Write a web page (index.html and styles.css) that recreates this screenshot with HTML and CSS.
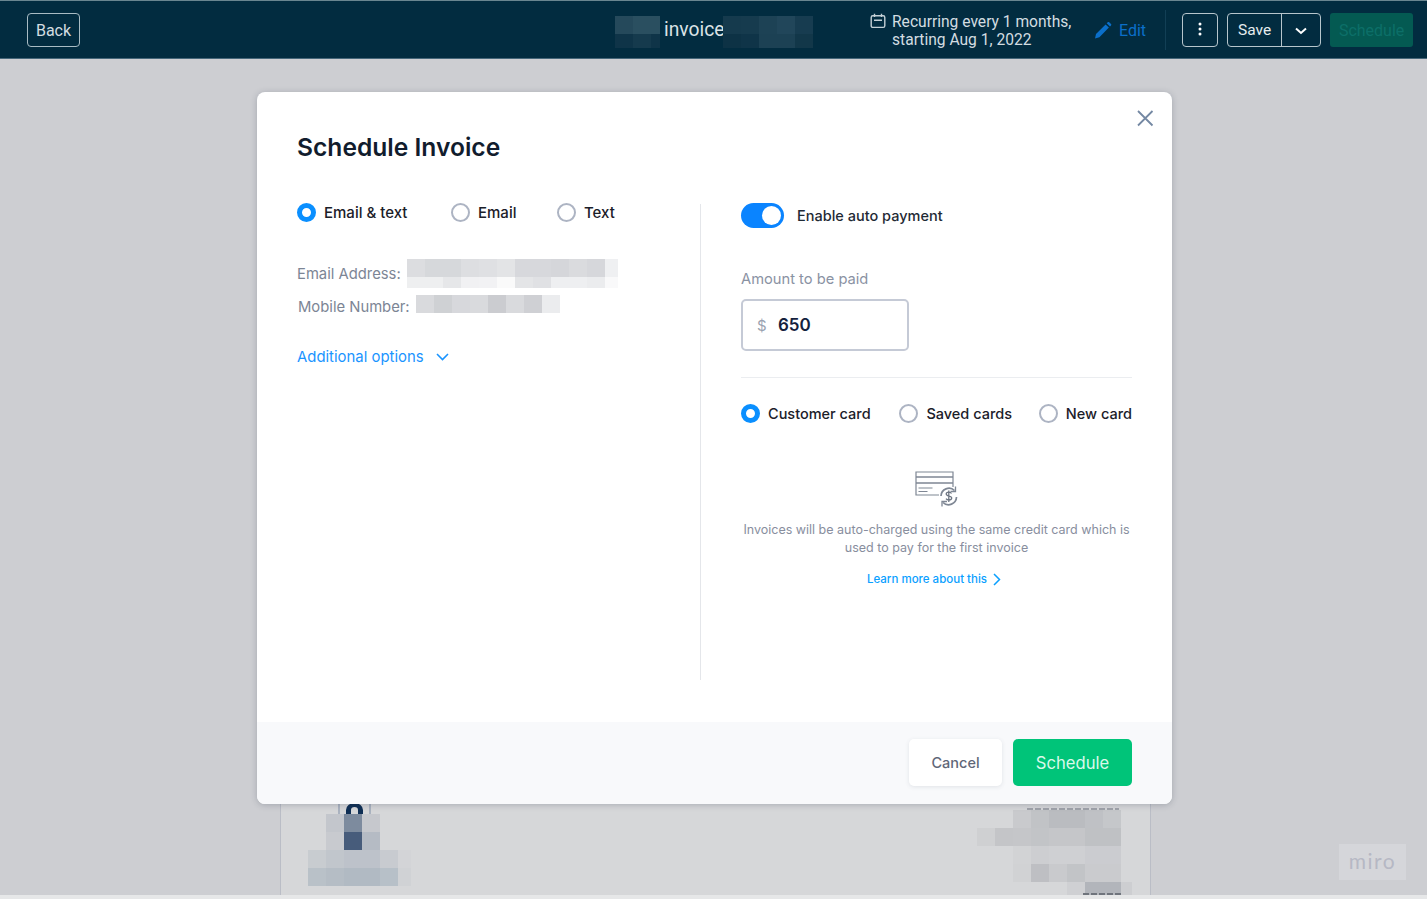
FILE: index.html
```html
<!DOCTYPE html>
<html lang="en">
<head>
    <meta charset="UTF-8">
    <meta name="viewport" content="width=device-width, initial-scale=1.0">
    <title>Schedule Invoice</title>
    <link rel="stylesheet" href="styles.css">
</head>
<body>
    <header class="topbar">
        <button class="btn-outline back-btn">Back</button>

        <div class="doc-title">
            <svg class="mosaic" width="45" height="32" shape-rendering="crispEdges">
                <rect x="0" y="0" width="18" height="18" fill="#25495b"/><rect x="18" y="0" width="27" height="18" fill="#2a4f60"/>
                <rect x="0" y="18" width="18" height="14" fill="#0f3448"/><rect x="18" y="18" width="18" height="14" fill="#153a4d"/><rect x="36" y="18" width="9" height="14" fill="#0f3448"/>
            </svg>
            <span class="doc-title-text">invoice</span>
            <svg class="mosaic" width="90" height="32" shape-rendering="crispEdges">
                <rect x="0" y="0" width="18" height="18" fill="#153a4d"/><rect x="18" y="0" width="18" height="18" fill="#163b4e"/><rect x="36" y="0" width="18" height="18" fill="#1d4255"/><rect x="54" y="0" width="18" height="18" fill="#21465a"/><rect x="72" y="0" width="18" height="18" fill="#173c50"/>
                <rect x="0" y="18" width="18" height="14" fill="#0d3245"/><rect x="18" y="18" width="18" height="14" fill="#0f3448"/><rect x="36" y="18" width="18" height="14" fill="#1c4154"/><rect x="54" y="18" width="18" height="14" fill="#1c4154"/><rect x="72" y="18" width="18" height="14" fill="#123749"/>
            </svg>
        </div>

        <div class="recurring">
            <svg class="cal-icon" width="16" height="16" viewBox="0 0 16 16" fill="none" stroke="#c4d0d6" stroke-width="1.4">
                <rect x="1.2" y="2.8" width="13.6" height="11.6" rx="1.6"/>
                <path d="M4.5 0.8v3.2M11.5 0.8v3.2M4 7.2h8"/>
            </svg>
            <span>Recurring every 1 months,<br>starting Aug 1, 2022</span>
        </div>

        <a class="edit-link" href="#">
            <svg width="18" height="17" viewBox="0 0 18 17" fill="#0b6fc9">
                <path d="M1 16.5l1-4.6L11.6 2.4l3.3 3.2-9.5 9.6zM12.7 1.3l1-1c.5-.4 1-.4 1.500 0l1.800 1.800c.4.4.4 1 0 1.400l-1 1z"/>
            </svg>
            Edit
        </a>

        <span class="bar-divider"></span>

        <button class="btn-outline kebab-btn">
            <svg width="4" height="14" viewBox="0 0 4 14" fill="#fff"><circle cx="2" cy="2" r="1.500"/><circle cx="2" cy="7" r="1.500"/><circle cx="2" cy="12" r="1.500"/></svg>
        </button>

        <div class="save-group">
            <button class="save-btn">Save</button>
            <button class="save-caret">
                <svg width="12" height="8" viewBox="0 0 12 8" fill="none" stroke="#fff" stroke-width="2"><path d="M1 1.500l5 4.500 5-4.500"/></svg>
            </button>
        </div>

        <button class="schedule-dim">Schedule</button>
    </header>

    <main class="page">
        <section class="doc">
            <!-- bits of the blurred invoice that stick out under the modal -->
            <svg class="doc-logo" width="34" height="10">
                <path d="M1 0v10M32 0v10" stroke="#8d9bb0" stroke-width="1.200"/>
                <path d="M8 10V6a8.500 7 0 0 1 17 0v4h-5V6a3.500 3 0 0 0-7 0v4z" fill="#0f2f55"/>
            </svg>
            <svg class="doc-mosaic-left" width="103" height="72" shape-rendering="crispEdges">
                <rect x="18" y="0" width="18" height="18" fill="#c3c6cc"/><rect x="36" y="0" width="18" height="18" fill="#7d8b9e"/><rect x="54" y="0" width="18" height="18" fill="#c6c8cd"/>
                <rect x="18" y="18" width="18" height="18" fill="#c8cacf"/><rect x="36" y="18" width="18" height="18" fill="#475c7b"/><rect x="54" y="18" width="18" height="18" fill="#b5bbc4"/>
                <rect x="0" y="36" width="18" height="18" fill="#c8ccd0"/><rect x="18" y="36" width="18" height="18" fill="#c1c6cc"/><rect x="36" y="36" width="36" height="18" fill="#bdc2ca"/><rect x="72" y="36" width="18" height="18" fill="#c8cbd0"/><rect x="90" y="36" width="13" height="18" fill="#d3d4d7"/>
                <rect x="0" y="54" width="18" height="18" fill="#b9c1c8"/><rect x="18" y="54" width="18" height="18" fill="#b5bdc5"/><rect x="36" y="54" width="36" height="18" fill="#b1bac3"/><rect x="72" y="54" width="18" height="18" fill="#b7c0c8"/><rect x="90" y="54" width="13" height="18" fill="#d0d2d5"/>
            </svg>
            <svg class="doc-mosaic-right" width="155" height="85" shape-rendering="crispEdges">
                <rect x="36" y="0" width="18" height="18" fill="#c9cacd"/><rect x="54" y="0" width="18" height="18" fill="#c1c3c6"/><rect x="72" y="0" width="36" height="18" fill="#babcc0"/><rect x="108" y="0" width="18" height="18" fill="#bfc1c5"/><rect x="126" y="0" width="18" height="18" fill="#c5c7ca"/>
                <rect x="0" y="18" width="18" height="18" fill="#cfd0d2"/><rect x="18" y="18" width="18" height="18" fill="#c4c5c8"/><rect x="36" y="18" width="18" height="18" fill="#c5c6c9"/><rect x="54" y="18" width="18" height="18" fill="#c2c4c7"/><rect x="72" y="18" width="36" height="18" fill="#c5c6c9"/><rect x="108" y="18" width="36" height="18" fill="#bfc1c4"/>
                <rect x="36" y="36" width="18" height="18" fill="#d2d3d5"/><rect x="54" y="36" width="18" height="18" fill="#cdced1"/><rect x="72" y="36" width="36" height="18" fill="#cfd0d3"/><rect x="108" y="36" width="36" height="18" fill="#cbccd0"/>
                <rect x="36" y="54" width="18" height="18" fill="#d1d2d4"/><rect x="54" y="54" width="18" height="18" fill="#bebfc3"/><rect x="72" y="54" width="18" height="18" fill="#c9cacd"/><rect x="90" y="54" width="18" height="18" fill="#c2c4c7"/><rect x="108" y="54" width="36" height="18" fill="#cacbce"/>
                <rect x="90" y="72" width="18" height="13" fill="#cfd0d3"/><rect x="108" y="72" width="36" height="13" fill="#b2b5bb"/><rect x="144" y="72" width="11" height="13" fill="#cdced1"/>
                <path d="M50 -1h92" stroke="#a0a3aa" stroke-width="2" stroke-dasharray="6 2"/>
                <path d="M106 84h39" stroke="#6f747c" stroke-width="2" stroke-dasharray="6 2"/>
            </svg>
        </section>
        <div class="page-foot"></div>

        <span class="miro-badge">miro</span>

        <div class="overlay">
            <div class="modal">
                <button class="modal-close" aria-label="Close">
                    <svg width="18" height="18" viewBox="0 0 18 18" stroke="#7488a3" stroke-width="1.800" fill="none"><path d="M2 2l14.500 14.500M16.500 2L2 16.500"/></svg>
                </button>

                <div class="modal-body">
                    <h1>Schedule Invoice</h1>

                    <div class="columns">
                        <div class="col-left">
                            <div class="radio-row send-row">
                                <label class="radio on">Email &amp; text</label>
                                <label class="radio">Email</label>
                                <label class="radio">Text</label>
                            </div>

                            <div class="detail-row email-row">
                                <span class="detail-label">Email Address:</span>
                                <svg width="211" height="29" shape-rendering="crispEdges">
                                    <rect x="0" y="0" width="18" height="18" fill="#dcdde0"/><rect x="18" y="0" width="36" height="18" fill="#d6d8db"/><rect x="54" y="0" width="18" height="18" fill="#dddee1"/><rect x="72" y="0" width="18" height="18" fill="#dfe0e3"/><rect x="90" y="0" width="18" height="18" fill="#e3e4e6"/><rect x="108" y="0" width="36" height="18" fill="#d7d8dc"/><rect x="144" y="0" width="18" height="18" fill="#d5d6da"/><rect x="162" y="0" width="18" height="18" fill="#dadbde"/><rect x="180" y="0" width="18" height="18" fill="#d6d7db"/><rect x="198" y="0" width="13" height="18" fill="#eff0f2"/>
                                    <rect x="0" y="18" width="36" height="11" fill="#eeeff0"/><rect x="36" y="18" width="18" height="11" fill="#e6e7e9"/><rect x="54" y="18" width="18" height="11" fill="#f1f1f3"/><rect x="72" y="18" width="18" height="11" fill="#f2f2f4"/><rect x="90" y="18" width="18" height="11" fill="#fafafa"/><rect x="108" y="18" width="18" height="11" fill="#e4e5e7"/><rect x="126" y="18" width="18" height="11" fill="#e0e1e4"/><rect x="144" y="18" width="36" height="11" fill="#eeeff1"/><rect x="180" y="18" width="18" height="11" fill="#ebecee"/><rect x="198" y="18" width="13" height="11" fill="#f9f9fa"/>
                                </svg>
                            </div>

                            <div class="detail-row mobile-row">
                                <span class="detail-label">Mobile Number:</span>
                                <svg width="144" height="18" shape-rendering="crispEdges">
                                    <rect x="0" y="0" width="18" height="18" fill="#d9dadd"/><rect x="18" y="0" width="18" height="18" fill="#cfd1d4"/><rect x="36" y="0" width="18" height="18" fill="#d7d8dc"/><rect x="54" y="0" width="18" height="18" fill="#d9dadd"/><rect x="72" y="0" width="18" height="18" fill="#cbccd0"/><rect x="90" y="0" width="18" height="18" fill="#d9dadd"/><rect x="108" y="0" width="18" height="18" fill="#cfd0d4"/><rect x="126" y="0" width="18" height="18" fill="#ebecee"/>
                                </svg>
                            </div>

                            <a class="more-link" href="#">
                                Additional options
                                <svg width="13" height="8" viewBox="0 0 13 8" fill="none" stroke="#1a94ff" stroke-width="1.600"><path d="M1 1l5.500 5.500L12 1"/></svg>
                            </a>
                        </div>

                        <div class="col-right">
                            <div class="toggle-row">
                                <span class="toggle"><span class="knob"></span></span>
                                <span class="toggle-label">Enable auto payment</span>
                            </div>

                            <div class="amount-label">Amount to be paid</div>
                            <div class="amount-input">
                                <span class="currency">$</span>
                                <span class="amount-value">650</span>
                            </div>

                            <hr class="rule">

                            <div class="radio-row card-row">
                                <label class="radio on">Customer card</label>
                                <label class="radio">Saved cards</label>
                                <label class="radio">New card</label>
                            </div>

                            <div class="card-info">
                                <svg class="card-icon" width="44" height="37" viewBox="0 0 44 37" fill="none" stroke="#7f8794" stroke-width="1.200">
                                    <path d="M24 24H1V1h37v15"/>
                                    <path d="M1 6h37M1 12h37" stroke-width="1.400"/>
                                    <path d="M3.500 17h14M3.500 20.500h9"/>
                                    <path d="M26 25a8 8 0 0 1 13.500-5.500M41.500 26a8 8 0 0 1-13.500 5.500" stroke-width="1.700"/>
                                    <path d="M40.500 15.500v5h-5M27 35.500v-5h5" stroke-width="1.300"/>
                                    <path d="M36.500 22.500c-.6-1-1.500-1.300-2.700-1.300-1.500 0-2.600.7-2.600 1.900 0 2.700 5.500 1.300 5.500 4 0 1.200-1.200 1.900-2.800 1.900-1.300 0-2.300-.5-2.900-1.400M33.800 19.500v11.500" stroke="#6d7582" stroke-width="1.300"/>
                                </svg>
                                <p>Invoices will be auto-charged using the same credit card which is<br>used to pay for the first invoice</p>
                                <a class="learn-link" href="#">
                                    Learn more about this
                                    <svg width="8" height="13" viewBox="0 0 8 13" fill="none" stroke="#0aa0ff" stroke-width="1.500"><path d="M1 1l5.500 5.500L1 12"/></svg>
                                </a>
                            </div>
                        </div>
                    </div>
                </div>

                <div class="modal-foot">
                    <button class="btn-cancel">Cancel</button>
                    <button class="btn-schedule">Schedule</button>
                </div>
            </div>
        </div>
    </main>
</body>
</html>
```

FILE: styles.css
```css
*,
*::before {
    box-sizing: border-box;
}

html,
body {
    height: 100%;
}

body {
    margin: 0;
    font-family: Inter, "Liberation Sans", sans-serif;
    background-color: #cdced2;
    display: flex;
    flex-direction: column;
    overflow: hidden;
}

button {
    font-family: inherit;
    cursor: pointer;
}

/* top bar */
.topbar {
    height: 59px;
    flex-shrink: 0;
    display: flex;
    align-items: center;
    padding-left: 27px;
    background-color: #022c40;
    border-top: 1px solid #6a8690;
    border-bottom: 1px solid #46677a;
    font-family: Roboto, "Liberation Sans", sans-serif;
    color: #dbe3e6;
}

.btn-outline {
    height: 34px;
    background: none;
    border: 1.500px solid #a9bcc4;
    border-radius: 4px;
    color: #d3dde1;
    font-size: 16px;
    padding: 1px 0 0;
}

.back-btn {
    width: 53px;
}

.doc-title {
    display: flex;
    align-items: center;
    margin-left: 535px;
}

.mosaic {
    transform: translateY(2px);
}

.doc-title-text {
    font-size: 19.300px;
    margin: 0 0 0 4px;
    width: 59px;
    white-space: nowrap;
}

.recurring {
    display: flex;
    align-items: flex-start;
    margin: 2px 0 0 57px;
    width: 203px;
    font-size: 15.600px;
    line-height: 18px;
    color: #d3dde1;
    white-space: nowrap;
}

.cal-icon {
    margin-right: 6px;
    flex-shrink: 0;
}

.edit-link {
    display: flex;
    align-items: center;
    gap: 7px;
    margin: 2px 0 0 21px;
    color: #0b6fc9;
    font-size: 16px;
    text-decoration: none;
}

.bar-divider {
    width: 1px;
    height: 40px;
    margin-left: 19px;
    background-color: #123f55;
}

.kebab-btn {
    width: 36px;
    margin-left: 16px;
    border-color: #b7c6cc;
}

.save-group {
    display: flex;
    width: 94px;
    height: 34px;
    margin-left: 9px;
    border: 1.500px solid #b7c6cc;
    border-radius: 4px;
}

.save-btn {
    width: 54px;
    background: none;
    border: none;
    border-right: 1.500px solid #b7c6cc;
    color: #e6ecee;
    font-size: 15.500px;
    padding: 1px 0 0;
}

.save-caret {
    flex: 1;
    background: none;
    border: none;
    padding: 1px 0 0;
}

.schedule-dim {
    width: 83px;
    height: 34px;
    margin-left: 9px;
    background-color: #045a52;
    border: none;
    border-radius: 3px;
    color: #0c6f68;
    font-size: 16px;
    padding: 1px 0 0;
}

/* page behind the modal */
.page {
    flex: 1;
    position: relative;
    display: flex;
    flex-direction: column;
    justify-content: flex-end;
}

.doc {
    position: relative;
    width: 871px;
    height: 120px;
    margin-left: 280px;
    background-color: #d6d7d9;
    border-left: 1px solid #babdc6;
    border-right: 1px solid #babdc6;
}

.doc-logo {
    position: absolute;
    left: 57px;
    top: 29px;
}

.doc-mosaic-left {
    position: absolute;
    left: 27px;
    top: 39px;
}

.doc-mosaic-right {
    position: absolute;
    left: 696px;
    top: 35px;
    overflow: visible;
}

.page-foot {
    height: 4px;
    background-color: #e6e7e8;
}

.miro-badge {
    position: absolute;
    left: 1339px;
    top: 785px;
    width: 67px;
    height: 36px;
    background-color: #d5d6da;
    color: #b6b8c4;
    font-family: Lato, sans-serif;
    font-size: 21px;
    letter-spacing: 1.500px;
    line-height: 33px;
    text-align: center;
}

.overlay {
    position: absolute;
    top: 0;
    left: 0;
    right: 0;
    bottom: 0;
    padding: 33px 0 0 257px;
}

/* modal */
.modal {
    position: relative;
    width: 915px;
    height: 712px;
    display: flex;
    flex-direction: column;
    background-color: #fff;
    border-radius: 8px;
    box-shadow: 0 1px 6px rgba(40, 50, 70, 0.25);
    overflow: hidden;
}

.modal-close {
    position: absolute;
    top: 17px;
    right: 18px;
    background: none;
    border: none;
    padding: 0;
    line-height: 0;
}

.modal-body {
    height: 630px;
    padding: 38px 40px 0;
}

h1 {
    margin: 0 0 40px;
    font-size: 24.600px;
    line-height: 34px;
    font-weight: 600;
    color: #111c2d;
}

.columns {
    display: flex;
}

.col-left {
    width: 404px;
    height: 476px;
    border-right: 1px solid #e4e6ea;
}

.col-right {
    width: 391px;
    margin-left: 40px;
}

.radio-row {
    display: flex;
    margin-top: -1px;
}

.radio {
    display: flex;
    align-items: center;
    height: 18px;
    font-size: 15px;
    font-weight: 500;
    color: #1b2029;
    white-space: nowrap;
}

.radio::before {
    content: "";
    width: 19px;
    height: 19px;
    margin-right: 8px;
    border: 2px solid #adb4c3;
    border-radius: 50%;
    flex-shrink: 0;
}

.radio.on::before {
    border: 5.500px solid #0a8fff;
}

.send-row .radio:nth-child(1) {
    width: 154px;
}

.send-row .radio:nth-child(2) {
    width: 106px;
}

.card-row .radio {
    font-size: 14.500px;
}

.card-row .radio:nth-child(1) {
    width: 159px;
}

.card-row .radio:nth-child(2) {
    width: 140px;
}

.detail-row {
    display: flex;
    align-items: flex-start;
    font-size: 14.800px;
    color: #7c8595;
}

.email-row {
    margin-top: 38px;
    line-height: 30px;
}

.mobile-row {
    margin: 6px 0 0 1px;
    line-height: 24px;
}

.email-row .detail-label {
    width: 110px;
}

.mobile-row .detail-label {
    width: 118px;
}

.more-link {
    display: flex;
    align-items: center;
    gap: 12px;
    margin-top: 28px;
    font-size: 14.900px;
    line-height: 20px;
    color: #1a94ff;
    text-decoration: none;
}

.toggle-row {
    display: flex;
    align-items: center;
    margin-top: -1px;
}

.toggle {
    display: flex;
    justify-content: flex-end;
    align-items: center;
    width: 43px;
    height: 25px;
    padding-right: 3px;
    background-color: #0a84ff;
    border-radius: 13px;
}

.knob {
    width: 19px;
    height: 19px;
    background-color: #fff;
    border-radius: 50%;
}

.toggle-label {
    margin-left: 13px;
    font-size: 14.500px;
    font-weight: 500;
    color: #1f2a35;
}

.amount-label {
    margin-top: 41px;
    font-size: 14.700px;
    line-height: 20px;
    color: #8a92a3;
}

.amount-input {
    display: flex;
    align-items: center;
    width: 168px;
    height: 52px;
    margin-top: 10px;
    padding-left: 14px;
    border: 2px solid #c5cad6;
    border-radius: 5px;
}

.currency {
    width: 21px;
    font-size: 15px;
    color: #9aa2b1;
}

.amount-value {
    font-size: 17px;
    font-weight: 600;
    color: #14213d;
}

.rule {
    height: 1px;
    margin: 26px 0 0;
    border: none;
    background-color: #ebedf0;
}

.card-row {
    margin-top: 26px;
}

.card-info {
    margin-top: 49px;
    text-align: center;
}

.card-icon {
    display: block;
    margin: 0 auto;
}

.card-info p {
    margin: 13px 0 0;
    font-size: 12.500px;
    line-height: 18px;
    color: #888e9e;
    white-space: nowrap;
}

.learn-link {
    display: inline-flex;
    align-items: center;
    gap: 6px;
    margin: 14px 5px 0 0;
    font-size: 11.500px;
    line-height: 16px;
    font-weight: 500;
    color: #0aa0ff;
    text-decoration: none;
}

.modal-foot {
    flex: 1;
    display: flex;
    justify-content: flex-end;
    gap: 11px;
    padding: 17px 40px 0 0;
    background-color: #f8f9fb;
}

.btn-cancel {
    width: 93px;
    height: 47px;
    background-color: #fff;
    border: none;
    border-radius: 5px;
    box-shadow: 0 1px 4px rgba(60, 70, 90, 0.12);
    color: #5f6778;
    font-size: 14.500px;
    font-weight: 500;
}

.btn-schedule {
    width: 119px;
    height: 47px;
    background-color: #00c479;
    border: none;
    border-radius: 5px;
    color: #d9f8ea;
    font-size: 16.600px;
}
```
